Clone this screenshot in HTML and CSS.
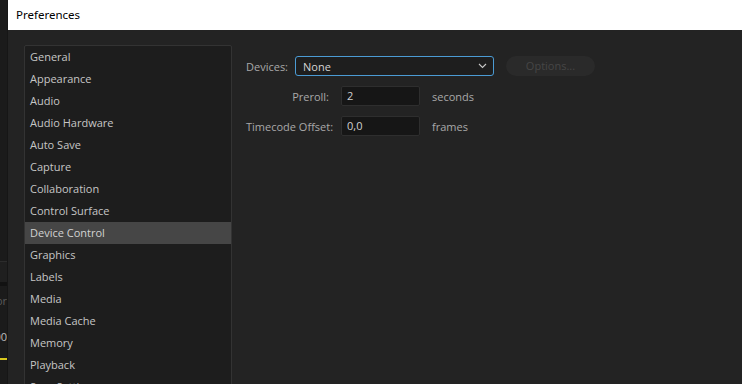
FILE: index.html
```html
<!DOCTYPE html>
<html lang="en">
<head>
    <meta charset="UTF-8">
    <title>Preferences</title>
    <link rel="stylesheet" href="styles.css">
</head>
<body>
    <div class="backdrop">
        <div class="bd-top"></div>
        <div class="bd-line"></div>
        <div class="bd-gap"></div>
        <div class="bd-band"></div>
        <div class="bd-text dim">Color</div>
        <div class="bd-text">00:00</div>
        <div class="bd-yellow"></div>
    </div>

    <div class="dialog">
        <div class="titlebar">Preferences</div>

        <div class="dialog-body">
            <div class="nav">
                <div class="nav-item">General</div>
                <div class="nav-item">Appearance</div>
                <div class="nav-item">Audio</div>
                <div class="nav-item">Audio Hardware</div>
                <div class="nav-item">Auto Save</div>
                <div class="nav-item">Capture</div>
                <div class="nav-item">Collaboration</div>
                <div class="nav-item">Control Surface</div>
                <div class="nav-item selected">Device Control</div>
                <div class="nav-item">Graphics</div>
                <div class="nav-item">Labels</div>
                <div class="nav-item">Media</div>
                <div class="nav-item">Media Cache</div>
                <div class="nav-item">Memory</div>
                <div class="nav-item">Playback</div>
                <div class="nav-item">Sync Settings</div>
            </div>

            <div class="content">
                <div class="row">
                    <span class="label">Devices:</span>
                    <div class="select">
                        <span>None</span>
                        <svg class="chevron" width="9" height="6" viewBox="0 0 9 6">
                            <path d="M1 1 L4.5 4.5 L8 1" fill="none" stroke="#c8c8c8" stroke-width="1.1"/>
                        </svg>
                    </div>
                    <div class="btn disabled">Options...</div>
                </div>

                <div class="row field-row">
                    <span class="label right">Preroll:</span>
                    <div class="input">2</div>
                    <span class="unit">seconds</span>
                </div>

                <div class="row field-row">
                    <span class="label right">Timecode Offset:</span>
                    <div class="input">0,0</div>
                    <span class="unit">frames</span>
                </div>
            </div>
        </div>
    </div>
</body>
</html>
```

FILE: styles.css
```css
body {
    margin: 0;
    display: flex;
    height: 384px;
    overflow: hidden;
    background: #1c1c1c;
    font-family: 'Open Sans', 'Noto Sans', sans-serif;
    font-size: 11px;
    color: #c6c6c6;
}

/* window behind the dialog */
.backdrop {
    width: 8px;
    flex-shrink: 0;
    display: flex;
    flex-direction: column;
    overflow: hidden;
    background: #1b1b1b;
    border-right: 1px solid #161616;
    box-sizing: border-box;
}

.bd-top {
    height: 261px;
}

.bd-line {
    height: 1px;
    background: #2c2c2c;
}

.bd-gap {
    height: 20px;
    background: #1f1f1f;
}

.bd-band {
    height: 4px;
    background: #121212;
}

.bd-text {
    display: flex;
    justify-content: flex-end;
    flex-shrink: 0;
    height: 18px;
    line-height: 18px;
    margin-top: 18px;
    white-space: nowrap;
    color: #bdbdbd;
    font-size: 11px;
}

.bd-text.dim {
    margin-top: 6px;
    color: #5a5a5a;
}

.bd-yellow {
    flex-shrink: 0;
    height: 2px;
    margin-top: 12px;
    background: #d8c81e;
}

.dialog {
    flex: 1;
    display: flex;
    flex-direction: column;
    background: #232323;
    min-width: 0;
}

.titlebar {
    height: 30px;
    line-height: 30px;
    padding-left: 8px;
    background: #fff;
    color: #000;
    font-family: 'Noto Sans', 'Open Sans', sans-serif;
    font-size: 11.5px;
}

.dialog-body {
    display: flex;
    padding: 15px 0 0 16px;
    gap: 14px;
    flex: 1;
    min-height: 0;
    overflow: hidden;
}

.nav {
    width: 208px;
    height: 360px;
    flex-shrink: 0;
    box-sizing: border-box;
    background: #1d1d1d;
    border: 1px solid #333;
    border-radius: 2px;
}

.nav-item {
    height: 22px;
    line-height: 22px;
    padding-left: 5px;
    white-space: nowrap;
}

.nav-item.selected {
    background: #464646;
    color: #d2d2d2;
}

.content {
    padding-top: 11px;
}

.row {
    display: flex;
    align-items: center;
    height: 20px;
    white-space: nowrap;
}

.field-row {
    margin-top: 10px;
}

.label {
    width: 49px;
    color: #a9a9a9;
}

.label.right {
    width: 83px;
    text-align: right;
    margin-right: 12px;
}

.select {
    width: 199px;
    height: 20px;
    box-sizing: border-box;
    display: flex;
    align-items: center;
    justify-content: space-between;
    padding: 0 6px 0 7px;
    background: #1e1e1e;
    border: 1px solid #4b9bd4;
    border-radius: 3px;
    color: #d4d4d4;
}

.chevron {
    display: block;
}

.btn {
    width: 89px;
    height: 20px;
    line-height: 20px;
    margin-left: 12px;
    text-align: center;
    border-radius: 10px;
    background: #2a2a2a;
}

.btn.disabled {
    color: #464646;
}

.input {
    width: 79px;
    height: 20px;
    line-height: 18px;
    box-sizing: border-box;
    padding-left: 5px;
    background: #161616;
    border: 1px solid #2e2e2e;
    border-radius: 2px;
    color: #d0d0d0;
}

.unit {
    margin-left: 12px;
    color: #a9a9a9;
}
```
